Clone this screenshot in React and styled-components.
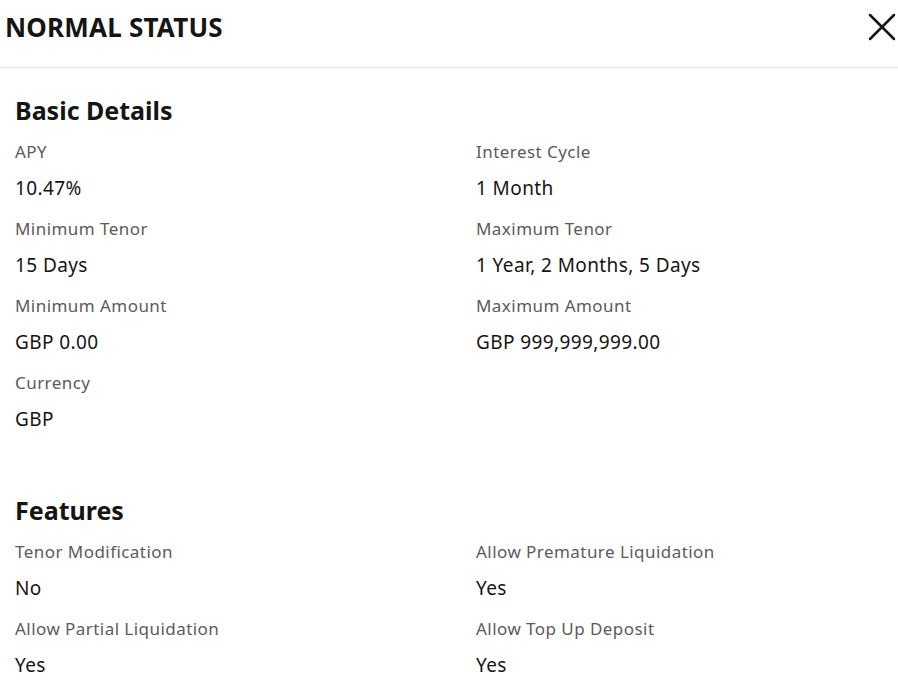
import React from 'react';
import styled, { createGlobalStyle } from 'styled-components';

const GlobalStyle = createGlobalStyle`
    body {
        margin: 0;
        background: #ffffff;
        font-family: "Noto Sans", "Open Sans", sans-serif;
        color: #161513;
    }
`

const Page = styled.div`
    width: 898px;
    height: 696px;
    overflow: hidden;
    background: #ffffff;
`

const Header = styled.div`
    display: flex;
    justify-content: space-between;
    align-items: center;
    height: 68px;
    padding: 0 0 0 5px;
    box-sizing: border-box;
    border-bottom: 1px solid #e4e4e4;
`

const Title = styled.h1`
    margin: 0;
    font-size: 26px;
    font-weight: 700;
    letter-spacing: 0.2px;
    color: #161513;
    padding-bottom: 14px;
`

const CloseButton = styled.button`
    display: flex;
    align-items: center;
    justify-content: center;
    width: 32px;
    height: 32px;
    padding: 0;
    margin-bottom: 14px;
    border: none;
    background: none;
    cursor: pointer;
`

const Body = styled.div`
    padding: 24px 15px 0;
`

const Section = styled.section`
    margin-bottom: ${props => props.spacing || 0}px;
`

const SectionTitle = styled.h2`
    margin: 0 0 12px;
    font-size: 25px;
    line-height: 36px;
    font-weight: 700;
    color: #161513;
`

const Grid = styled.div`
    display: grid;
    grid-template-columns: 461px 1fr;
    row-gap: 17px;
`

const Field = styled.div`
    display: flex;
    flex-direction: column;
`

const Label = styled.div`
    font-size: 17px;
    line-height: 24px;
    letter-spacing: 0.45px;
    color: #5b5b5b;
`

const Value = styled.div`
    margin-top: 12px;
    font-size: 19px;
    line-height: 24px;
    letter-spacing: 0.4px;
    color: #161513;
`

const basic = [
    ['APY', '10.47%'],
    ['Interest Cycle', '1 Month'],
    ['Minimum Tenor', '15 Days'],
    ['Maximum Tenor', '1 Year, 2 Months, 5 Days'],
    ['Minimum Amount', 'GBP 0.00'],
    ['Maximum Amount', 'GBP 999,999,999.00'],
    ['Currency', 'GBP'],
]

const features = [
    ['Tenor Modification', 'No'],
    ['Allow Premature Liquidation', 'Yes'],
    ['Allow Partial Liquidation', 'Yes'],
    ['Allow Top Up Deposit', 'Yes'],
]

const CloseIcon = () => (
    <svg width="30" height="30" viewBox="0 0 30 30">
        <path d="M3 3 L27 27 M27 3 L3 27" stroke="#161513" strokeWidth="2.5" strokeLinecap="round" />
    </svg>
)

const App = () => (
    <Page>
        <GlobalStyle />
        <Header>
            <Title>NORMAL STATUS</Title>
            <CloseButton aria-label="Close"><CloseIcon /></CloseButton>
        </Header>
        <Body>
            <Section spacing={61}>
                <SectionTitle>Basic Details</SectionTitle>
                <Grid>
                    {basic.map(([label, value]) => (
                        <Field key={label}>
                            <Label>{label}</Label>
                            <Value>{value}</Value>
                        </Field>
                    ))}
                </Grid>
            </Section>
            <Section>
                <SectionTitle>Features</SectionTitle>
                <Grid>
                    {features.map(([label, value]) => (
                        <Field key={label}>
                            <Label>{label}</Label>
                            <Value>{value}</Value>
                        </Field>
                    ))}
                </Grid>
            </Section>
        </Body>
    </Page>
)

export default App;
